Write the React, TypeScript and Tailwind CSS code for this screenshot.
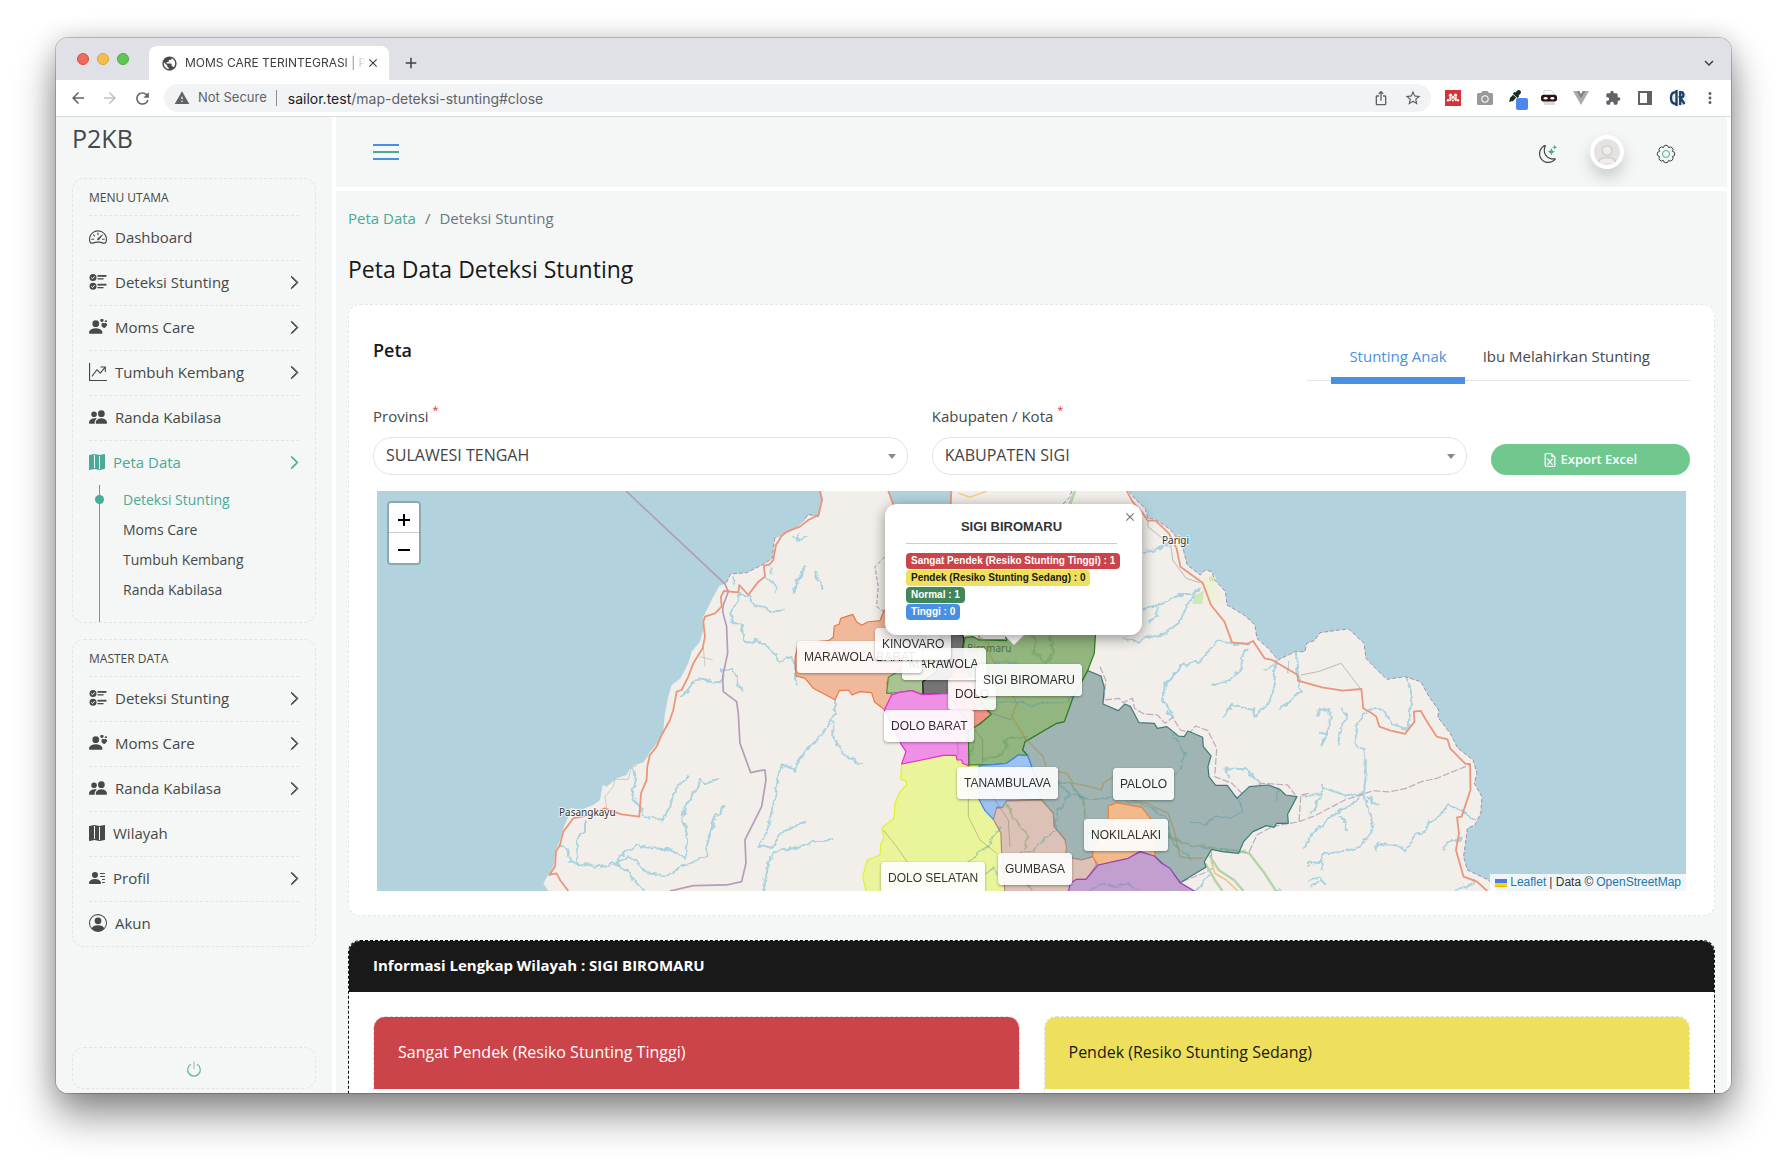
import { useId, useState } from "react";
import type { ReactNode } from "react";
import {
  BsChevronRight,
  BsFileEarmarkExcel,
  BsGraphUpArrow,
  BsMapFill,
  BsPeopleFill,
  BsPersonCircle,
  BsPersonHearts,
  BsPersonLinesFill,
  BsSpeedometer2,
} from "react-icons/bs";
import { FaCamera, FaEyeDropper } from "react-icons/fa";
import {
  MdAdd,
  MdArrowBack,
  MdArrowForward,
  MdClose,
  MdExpandMore,
  MdExtension,
  MdIosShare,
  MdMoreVert,
  MdPublic,
  MdRefresh,
  MdStarBorder,
  MdWarning,
} from "react-icons/md";

/* ---------- Browser chrome ---------- */

function TabStrip() {
  return (
    <div className="flex h-[42px] shrink-0 items-end bg-[#dfe1e6] pl-[21px]">
      <div className="flex gap-2 self-center">
        <button aria-label="Close window" className="size-3 rounded-full border border-[#d8503f] bg-[#ed6a5e]" />
        <button aria-label="Minimise window" className="size-3 rounded-full border border-[#dda13a] bg-[#f5bf4f]" />
        <button aria-label="Zoom window" className="size-3 rounded-full border border-[#4faa3c] bg-[#61c554]" />
      </div>
      <div className="ml-5 flex h-[34px] w-60 items-center rounded-t-lg bg-white pl-3 pr-[9px] text-[#3c4043]">
        <MdPublic className="size-[17px] shrink-0 text-[#46494d]" />
        <span className="ml-[7px] flex-1 whitespace-nowrap text-[12px] [mask-image:linear-gradient(to_right,black_88%,transparent)]">
          MOMS CARE TERINTEGRASI | P
        </span>
        <button aria-label="Close tab">
          <MdClose className="size-[14px]" />
        </button>
      </div>
      <button aria-label="New tab" className="mb-2 ml-[13px] text-[#3c4043]">
        <MdAdd className="size-[18px]" />
      </button>
      <button aria-label="Search tabs" className="mb-2 ml-auto mr-[13px] text-[#3c4043]">
        <MdExpandMore className="size-[18px]" />
      </button>
    </div>
  );
}

function Toolbar() {
  return (
    <div className="flex h-[37px] shrink-0 items-center border-b border-[#dadce0] bg-white pl-[13px] pr-3 text-[#5f6368]">
      <button aria-label="Back">
        <MdArrowBack className="size-[18px]" />
      </button>
      <button aria-label="Forward" className="ml-[14px] text-[#bdc1c6]">
        <MdArrowForward className="size-[18px]" />
      </button>
      <button aria-label="Reload" className="ml-[14px]">
        <MdRefresh className="size-[19px]" />
      </button>
      <div className="ml-3 flex h-7 flex-1 items-center rounded-full bg-[#f1f3f4] pl-[10px] pr-[9px]">
        <MdWarning className="size-4" />
        <span className="ml-2 whitespace-nowrap text-[13px]">Not Secure</span>
        <span className="ml-[9px] h-4 w-px bg-[#8a8d91]" />
        <span className="ml-[11px] flex-1 whitespace-nowrap text-[14px]">
          <span className="text-[#202124]">sailor.test</span>/map-deteksi-stunting#close
        </span>
        <button aria-label="Share">
          <MdIosShare className="size-[16px]" />
        </button>
        <button aria-label="Bookmark" className="ml-[15px]">
          <MdStarBorder className="size-[18px]" />
        </button>
      </div>
      <div className="ml-[14px] flex items-center gap-4">
        <svg viewBox="0 0 16 16" className="size-4" aria-hidden="true">
          <rect width="16" height="16" fill="#d63337" />
          <g fill="#fff">
            <circle cx="5.500" cy="5.200" r="1.600" />
            <circle cx="10.500" cy="5.200" r="1.600" />
            <circle cx="8" cy="7.300" r="1.500" />
            <circle cx="3" cy="10.300" r="1.200" />
            <circle cx="13" cy="10.300" r="1.200" />
            <circle cx="8" cy="10.600" r="1" />
            <path d="M4.300 6.300 7 8.800 5.800 11H4.300zM11.700 6.300 9 8.800l1.200 2.200h1.500z" />
          </g>
        </svg>
        <FaCamera className="size-4 text-[#97999b]" />
        <span className="relative block size-4">
          <FaEyeDropper className="size-3 text-[#1c2b20]" />
          <span className="absolute left-[7px] top-2 size-3 rounded-xs bg-[#4f86ee]" />
        </span>
        <svg viewBox="0 0 16 16" className="size-4" aria-hidden="true">
          <path d="M3 5V.5h7L13 3v2" fill="#fff" stroke="#ccc" strokeWidth=".8" />
          <path d="M2 11.500h12v3.500H3z" fill="#ddd" />
          <rect y="4.800" width="16" height="6.700" rx="2.500" fill="#2f1113" />
          <ellipse cx="4.600" cy="8.200" rx="2" ry="1.200" fill="#fff" />
          <ellipse cx="11.400" cy="8.200" rx="2" ry="1.200" fill="#fff" />
        </svg>
        <svg viewBox="0 0 16 16" className="size-4" aria-hidden="true">
          <path d="M0 1h3.300L8 9l4.700-8H16L8 15z" fill="#a9acaf" />
          <path d="M3.300 1h3L8 4l1.700-3h3L8 9z" fill="#7f8386" />
        </svg>
        <MdExtension className="size-4" />
        <svg viewBox="0 0 16 16" className="size-4" aria-hidden="true">
          <path d="M1 1h14v14H1zM3 3v10h7V3z" fill="#5f6368" fillRule="evenodd" />
        </svg>
        <svg viewBox="0 0 18 18" className="size-[18px]" aria-hidden="true">
          <circle cx="9" cy="9" r="9" fill="#e9eef3" />
          <path
            d="M6.500 3.200C3.400 3.200 2 5.500 2 9s1.400 5.800 4.500 5.800M7.500 1v16M11.200 2v14M11.200 3.200h1c3 0 3 5.300 0 5.300h-1l4.300 6.500"
            fill="none"
            stroke="#1d3f66"
            strokeWidth="2.300"
          />
        </svg>
        <button aria-label="Browser menu" className="-ml-[2px]">
          <MdMoreVert className="size-[18px]" />
        </button>
      </div>
    </div>
  );
}

/* ---------- Sidebar ---------- */

function ChecklistIcon() {
  return (
    <svg viewBox="0 0 17 16" className="h-4 w-[18px]" fill="currentColor" aria-hidden="true">
      <circle cx="3.500" cy="3.500" r="3.500" />
      <circle cx="3.500" cy="12.300" r="3.500" />
      <path d="M1.700 3.500 3 4.800 5.300 2.300M1.700 12.300 3 13.600l2.300-2.500" stroke="#f4f7f6" strokeWidth="1" fill="none" />
      <rect x="8" y="1" width="9" height="1.800" />
      <rect x="8" y="4.200" width="6" height="1.300" />
      <rect x="8" y="9.800" width="9" height="1.800" />
      <rect x="8" y="13" width="6" height="1.300" />
    </svg>
  );
}

type Item = { label: string; icon: ReactNode; arrow?: boolean; active?: boolean };

const mainMenu: Item[] = [
  { label: "Dashboard", icon: <BsSpeedometer2 className="size-[18px]" /> },
  { label: "Deteksi Stunting", icon: <ChecklistIcon />, arrow: true },
  { label: "Moms Care", icon: <BsPersonHearts className="size-[18px]" />, arrow: true },
  { label: "Tumbuh Kembang", icon: <BsGraphUpArrow className="size-[18px]" />, arrow: true },
  { label: "Randa Kabilasa", icon: <BsPeopleFill className="size-[18px]" /> },
  { label: "Peta Data", icon: <BsMapFill className="size-4" />, arrow: true, active: true },
];

const masterMenu: Item[] = [
  { label: "Deteksi Stunting", icon: <ChecklistIcon />, arrow: true },
  { label: "Moms Care", icon: <BsPersonHearts className="size-[18px]" />, arrow: true },
  { label: "Randa Kabilasa", icon: <BsPeopleFill className="size-[18px]" />, arrow: true },
  { label: "Wilayah", icon: <BsMapFill className="size-4" /> },
  { label: "Profil", icon: <BsPersonLinesFill className="size-4" />, arrow: true },
  { label: "Akun", icon: <BsPersonCircle className="size-[18px]" /> },
];

const subMenu = ["Deteksi Stunting", "Moms Care", "Tumbuh Kembang", "Randa Kabilasa"];

function MenuBox({ title, items, children }: { title: string; items: Item[]; children?: ReactNode }) {
  return (
    <nav aria-label={title} className="rounded-xl border border-dashed border-[#e3e5e4] px-4">
      <h2 className="pb-2 pt-[10px] text-[12px] leading-[18px]">{title}</h2>
      <ul>
        {items.map((item) => (
          <li key={item.label} className="border-t border-dashed border-[#e3e5e4]">
            <a
              href="#"
              className={
                item.active
                  ? "flex h-11 items-center gap-2 pb-0.5 text-[15px] text-[#4aaa97]"
                  : "flex h-11 items-center gap-2 pb-0.5 text-[15px]"
              }
            >
              {item.icon}
              <span>{item.label}</span>
              {item.arrow && <BsChevronRight className="-mr-[3px] ml-auto size-[15px]" strokeWidth={1} />}
            </a>
          </li>
        ))}
      </ul>
      {children}
    </nav>
  );
}

function Sidebar() {
  return (
    <aside className="flex w-[280px] shrink-0 flex-col border-r-4 border-white px-4 pb-1 text-[#454948]">
      <div className="pt-[7px] text-[25px] leading-7">P2KB</div>
      <div className="mt-[26px] flex flex-col gap-4">
        <MenuBox title="MENU UTAMA" items={mainMenu}>
          <ul className="ml-[10px] border-l border-[#4aaa97] pb-[17px]">
            {subMenu.map((label, i) => (
              <li key={label} className="relative pl-[23px] text-[14px] leading-[30px]">
                {i === 0 && <span className="absolute -left-[5px] top-[10px] size-[9px] rounded-full bg-[#4aaa97]" />}
                <a href="#" className={i === 0 ? "text-[#4aaa97]" : ""}>
                  {label}
                </a>
              </li>
            ))}
          </ul>
        </MenuBox>
        <MenuBox title="MASTER DATA" items={masterMenu} />
      </div>
      <button
        aria-label="Log out"
        className="mt-auto flex h-[42px] items-center justify-center rounded-xl border border-dashed border-[#e3e5e4] pt-0.5"
      >
        <svg viewBox="0 0 16 16" className="size-4" fill="none" aria-hidden="true">
          <path d="M5 3.200a6.300 6.300 0 1 0 6 0" stroke="#62b5a5" strokeWidth="1.200" />
          <path d="M8 .5v7.500" stroke="#c9cccb" strokeWidth="1.800" />
        </svg>
      </button>
    </aside>
  );
}

/* ---------- Page header ---------- */

const gearPath = (() => {
  const at = (i: number) => {
    const a = (Math.PI / 4) * i + Math.PI / 8;
    return `${(9 + 6.9 * Math.cos(a)).toFixed(2)} ${(9 + 6.9 * Math.sin(a)).toFixed(2)}`;
  };
  return `M${at(0)}` + [1, 2, 3, 4, 5, 6, 7, 8].map((i) => `A2.650 2.650 0 0 1 ${at(i)}`).join("") + "Z";
})();

function PageHeader() {
  return (
    <header className="flex h-[74px] shrink-0 items-center border-b-4 border-white pl-[37px] pr-[52px]">
      <button aria-label="Toggle menu" className="flex w-[26px] flex-col gap-[5px]">
        <span className="h-[2px] bg-[#4a90e2]" />
        <span className="h-[2px] bg-[#4aaa97]" />
        <span className="h-[2px] bg-[#4a90e2]" />
      </button>
      <div className="ml-auto flex items-center gap-[33px]">
        <button aria-label="Dark mode" className="mt-1">
          <svg viewBox="0 0 16 16" className="size-[18px]" aria-hidden="true">
            <path
              fill="#3f4443"
              d="M6 .278a.768.768 0 0 1 .08.858 7.208 7.208 0 0 0-.878 3.460c0 4.021 3.278 7.277 7.318 7.277.527 0 1.040-.055 1.533-.16a.787.787 0 0 1 .81.316.733.733 0 0 1-.031.893A8.349 8.349 0 0 1 8.344 16C3.734 16 0 12.286 0 7.710 0 4.266 2.114 1.312 5.124.06A.752.752 0 0 1 6 .278zM4.858 1.311A7.269 7.269 0 0 0 1.025 7.710c0 4.020 3.279 7.276 7.319 7.276a7.316 7.316 0 0 0 5.205-2.162c-.337.042-.68.063-1.029.063-4.610 0-8.343-3.714-8.343-8.290 0-1.167.242-2.278.681-3.286z"
            />
            <path
              fill="#4aaa97"
              d="M10.794 3.148a.217.217 0 0 1 .412 0l.387 1.162c.173.518.579.924 1.097 1.097l1.162.387a.217.217 0 0 1 0 .412l-1.162.387a1.734 1.734 0 0 0-1.097 1.097l-.387 1.162a.217.217 0 0 1-.412 0l-.387-1.162A1.734 1.734 0 0 0 9.310 6.593l-1.162-.387a.217.217 0 0 1 0-.412l1.162-.387a1.734 1.734 0 0 0 1.097-1.097l.387-1.162zM13.863.099a.145.145 0 0 1 .274 0l.258.774c.115.346.386.617.732.732l.774.258a.145.145 0 0 1 0 .274l-.774.258a1.156 1.156 0 0 0-.732.732l-.258.774a.145.145 0 0 1-.274 0l-.258-.774a1.156 1.156 0 0 0-.732-.732l-.774-.258a.145.145 0 0 1 0-.274l.774-.258c.346-.115.617-.386.732-.732L13.863.1z"
            />
          </svg>
        </button>
        <button aria-label="Account" className="rounded-full border-4 border-white bg-[#e4e3e2] shadow-[0_8px_16px_rgba(0,0,0,0.18)]">
          <svg viewBox="0 0 26 26" className="size-[26px] rounded-full" fill="none" stroke="#d2d0cf" strokeWidth="1.600" aria-hidden="true">
            <circle cx="13" cy="11.500" r="4.800" fill="#eeedec" />
            <path d="M4.500 24c0-4 3.500-5.500 8.500-5.500s8.500 1.500 8.500 5.500" fill="#eeedec" />
          </svg>
        </button>
        <button aria-label="Settings" className="mt-1">
          <svg viewBox="0 0 18 18" className="size-[18px] overflow-visible" fill="none" strokeWidth="1" aria-hidden="true">
            <path d={gearPath} stroke="#3f4443" />
            <circle cx="9" cy="9" r="3.500" stroke="#4aaa97" />
          </svg>
        </button>
      </div>
    </header>
  );
}

/* ---------- Map ---------- */

type LineSet = string[];

const westRivers: LineSet = [
  "1165,345 1140,345 1110,400 1120,430 1145,430 1150,480 1175,490 1190,482 1215,495 1235,510 1260,545 1290,530 1305,545 1305,600 1312,612",
  "1165,345 1180,375 1210,380 1235,395 1272,390",
  "1338,260 1322,285 1310,310 1300,338",
  "1215,290 1240,310 1248,338",
  "1235,260 1235,285",
  "1115,285 1125,315",
  "1083,570 1120,568 1130,600 1148,632",
  "960,643 980,635 1000,605 1030,598 1060,608 1085,605 1088,580",
  "820,855 828,900 815,940 825,970 845,985 850,1010 880,1013 905,1025 930,985 940,940 960,910 990,887",
  "975,1137 985,1080 970,1020 975,980 1000,940 1020,900 1040,910 1078,897",
  "765,1152 780,1130 830,1095 870,1105 930,1108 975,1137",
  "1090,975 1085,1000 1065,1010 1050,1060 1035,1130 975,1155 925,1187 860,1180 810,1130 765,1152 700,1160 655,1150 650,1075 675,1060 675,1020",
  "600,1095 625,1110 630,1145 660,1155",
  "765,1152 810,1175 830,1210 855,1233",
  "1350,800 1315,840 1305,870 1270,855 1255,890 1245,950 1225,1040 1198,1100 1235,1100 1270,1055 1335,1025",
  "1350,1090 1300,1105 1240,1115 1225,1150 1210,1233",
  "1425,659 1425,700 1390,760 1340,810",
  "1420,720 1420,770 1450,825 1507,850",
  "1350,1090 1420,1077",
  "1340,260 1300,335",
  "1365,270 1390,328",
  "1295,165 1320,180 1340,170",
  "1315,160 1318,185",
  "2460,565 2420,610 2410,660 2435,700",
];

const westRoad =
  "1380,33 1386,60 1376,105 1345,120 1320,140 1280,155 1265,168 1248,195 1240,240 1228,254 1212,257 1215,290 1195,305 1165,345 1138,315 1135,337 1092,333 1083,350 1085,380 1065,400 1035,410 1030,425 1035,470 1028,505 1000,550 985,590 965,630 950,635 940,690 930,720 905,765 890,800 870,825 862,860 860,900 843,940 838,1010 785,1003 735,985 690,1005 640,1015 610,1055 600,1095 588,1115 585,1160 568,1185 590,1180 600,1200 625,1233";

const westCoast =
  "1383,33 1390,60 1380,85 1376,110 1345,105 1330,125 1300,150 1265,168 1245,175 1240,205 1237,235 1212,252 1160,278 1112,282 1098,310 1078,318 1060,350 1045,380 1028,415 1030,450 1020,485 995,515 985,550 962,595 935,615 925,650 915,700 910,750 895,785 870,815 850,845 815,855 800,885 770,895 740,920 728,915 720,960 700,975 660,990 632,983 625,1010 612,1040 600,1080 588,1110 580,1160 565,1185 550,1210 565,1233";

const eastCoast =
  "75,33 90,55 118,85 125,115 145,118 185,150 205,180 218,210 228,255 262,285 275,270 292,275 300,300 328,335 332,375 355,390 380,408 405,435 410,475 440,505 465,540 510,515 535,515 540,490 560,482 575,458 625,450 650,447 690,490 695,535 720,565 750,598 797,590 838,605 860,650 885,690 883,712 915,760 935,805 975,840 985,880 978,910 998,950 995,1000 980,1035 960,1045 955,1090 950,1130 960,1170 1015,1200 1040,1233";

const eastRoad =
  "70,33 85,65 112,100 125,122 145,122 180,160 200,205 210,260 240,285 268,308 290,375 325,425 345,487 385,492 400,483 430,535 450,540 517,585 517,602 580,622 635,632 683,627 688,685 710,700 722,710 730,740 760,752 797,762 822,725 820,695 838,693 860,735 880,770 908,778 915,805 955,852 967,852 968,930 945,1010 933,1012 938,1060 930,1110 950,1190 985,1205 1012,1233";

const eastRivers: LineSet = [
  "110,213 150,208 185,195",
  "262,320 240,345 205,345 170,370 130,380 110,390",
  "262,320 225,385 205,430 170,460 115,470 100,485 60,475",
  "150,380 150,410 125,425",
  "395,490 350,495 305,480 265,540 215,555 170,610 165,670",
  "385,505 370,530 370,570 330,605 288,618",
  "172,688 190,715",
  "460,545 455,610 440,670 420,690 405,710 400,690 345,675 320,710",
  "430,573 455,555",
  "492,540 490,580",
  "512,515 515,570 525,635 490,665 468,695",
  "570,710 575,685 600,690 600,740 580,800",
  "575,755 595,765",
  "632,685 645,710 628,740 622,800",
  "695,695 670,730 665,790 688,810 695,870 690,940",
  "700,690 735,685 765,735 805,750 810,700 815,640 797,590",
  "335,895 330,865 380,868 420,910 430,930",
  "690,940 640,950 580,918 575,940 530,950",
  "580,940 560,990 545,1005",
  "690,940 640,985 590,1020 555,1060 532,1110",
  "690,940 700,985 715,1030 700,1075 680,1100 640,1115 590,1120 575,1150 545,1145 548,1160",
  "620,1010 645,1030 645,1050",
  "700,950 710,970 730,970",
  "718,1115 725,1090 780,1100 800,1110 830,1060 850,1055 860,1025 890,1005 910,970 930,985 980,1020",
  "545,1200 570,1190 590,1215",
  "550,1220 580,1200",
  "895,1110 920,1080 945,1080",
  "930,1230 980,1205",
  "250,1233 290,1185",
  "455,1233 470,1233",
  "575,1150 580,1170",
];

const eastBoundaries: LineSet = [
  "0,560 15,600 10,660 50,655 60,668 85,655 90,685 115,702 150,705 170,730 190,712 210,750 235,758 250,738 282,752 305,805 300,890 345,910 375,945 420,910 490,915 510,945",
  "390,1115 410,1065 450,1040 520,1025 560,1008 640,960 715,932 755,936 800,925 840,905 880,895 965,855",
  "545,940 525,945 520,1025",
  "215,1205 270,1180 295,1165 290,1110",
];

type Region = { name: string; fill: string; line: string; points: string };

const regions: Region[] = [
  {
    name: "Marawola Barat",
    fill: "#f1b99c",
    line: "#e87a45",
    points:
      "313,30 300,62 262,66 246,76 230,66 218,43 182,55 178,72 163,78 160,112 145,122 55,130 45,175 48,228 75,235 100,265 165,299 178,272 205,270 216,285 240,275 275,278 283,305 315,330 335,285 320,250 330,230 370,200 440,150 430,60",
  },
  {
    name: "Kinovaro",
    fill: "#a9c492",
    line: "#4f8f3b",
    points: "320,280 325,232 370,205 440,130 480,180 468,235 430,240 427,284 395,272 355,278",
  },
  {
    name: "Marawola",
    fill: "#767474",
    line: "#1b1b1b",
    points: "480,100 548,105 552,118 548,150 555,240 505,280 430,284 428,245 470,215",
  },
  {
    name: "Dolo",
    fill: "#f0948a",
    line: "#d9443b",
    points: "525,180 600,180 620,330 635,343 580,386 545,340 505,280",
  },
  {
    name: "Dolo Selatan",
    fill: "#eaf59b",
    line: "#e3f02c",
    points:
      "365,492 425,480 490,466 528,466 532,485 567,498 595,495 600,600 640,658 663,700 665,760 675,880 260,880 248,830 262,780 300,765 302,735 312,712 305,685 342,655 345,610 360,575 380,555 378,543 362,538",
  },
  {
    name: "Dolo Barat",
    fill: "#f08fe6",
    line: "#e02fd0",
    points:
      "335,285 355,278 395,272 427,284 505,280 545,340 580,386 565,390 567,498 548,490 545,480 532,480 528,466 490,466 425,480 365,492 378,455 362,430 313,330",
  },
  {
    name: "Palolo",
    fill: "#a0b5b3",
    line: "#3d7a76",
    points:
      "923,212 963,228 973,262 969,312 1015,332 1035,312 1052,320 1077,368 1123,370 1132,385 1161,380 1195,408 1213,410 1224,393 1268,412 1270,440 1293,468 1284,500 1287,530 1307,556 1342,556 1371,595 1408,560 1465,555 1500,568 1517,585 1551,590 1523,643 1525,670 1490,670 1482,682 1459,677 1419,695 1391,725 1376,760 1327,755 1295,748 1273,785 1278,802 1247,820 1201,848 1180,820 1123,768 1080,755 940,770 905,780 855,770 855,720 822,680 820,640 785,600 770,540 743,467 728,450 735,425 790,393 830,370 853,365 880,290",
  },
  {
    name: "Sigi Biromaru",
    fill: "#93b680",
    line: "#2d7d1f",
    points:
      "555,112 580,110 597,120 680,122 680,95 947,95 943,160 923,212 880,290 853,365 830,370 790,393 735,425 728,450 743,467 715,465 680,490 640,494 567,495 565,392 600,372 634,343 600,300 560,200 548,160",
  },
  {
    name: "Tanambulava",
    fill: "#9dc1f0",
    line: "#4187ea",
    points:
      "597,497 640,494 680,490 715,465 743,467 755,500 785,598 680,603 668,622 650,622 650,640 640,658 615,632 598,600",
  },
  {
    name: "Gumbasa",
    fill: "#dcc2b6",
    line: "#b48a79",
    points:
      "640,658 650,625 668,622 680,603 785,600 820,640 822,680 855,720 860,745 855,770 905,780 940,770 950,795 918,838 890,838 865,880 675,880 665,760 663,700",
  },
  {
    name: "Nokilalaki",
    fill: "#f2ba8c",
    line: "#e8833a",
    points: "985,618 1010,608 1085,622 1115,660 1125,700 1125,770 1080,755 1045,775 955,795 938,770 940,740 985,680",
  },
  {
    name: "Kulawi",
    fill: "#c39fcf",
    line: "#9a3fbf",
    points: "865,880 870,850 890,838 918,838 955,795 1045,775 1080,755 1123,768 1145,790 1170,805 1200,848 1255,880",
  },
];

const innerRoads: LineSet = [
  "600,112 625,130 630,165 700,290 710,310 695,350 740,420 790,470 800,510 860,520 880,550 930,560 965,570 970,550 1000,530",
  "1000,590 1100,610 1165,640 1185,700 1200,770 1230,775 1270,775",
];
const innerGreens: LineSet = [
  "740,90 770,120 760,160 800,185 820,160 810,100",
  "735,425 740,410 680,410 670,425 685,440 665,465 610,480",
  "570,410 585,430 570,470",
  "680,610 700,650 740,700 735,750",
  "690,790 740,840 760,873",
  "830,545 870,550 910,600 915,650",
  "1160,700 1200,730 1300,745 1400,755",
];
const innerRivers: LineSet = [
  "640,190 680,180 730,200 800,230 850,240",
  "640,310 700,300 760,315 850,310 880,290",
  "830,545 870,580 830,640 825,690 760,750 700,770",
  "870,580 930,600 1000,590 1110,620 1160,660 1180,730 1240,780",
  "660,680 620,740 560,790",
  "600,840 640,800 660,830",
  "1180,400 1213,460 1207,500 1180,530",
  "1230,660 1270,675 1310,650 1350,655 1390,635 1367,585",
  "1495,570 1490,610",
  "930,870 970,850 1010,860 1050,850 1070,870",
];
const innerTracks: LineSet = [
  "530,390 535,465",
  "585,390 608,420 608,490",
  "635,340 695,360",
  "565,560 565,650 600,720 650,760",
  "310,690 350,740 405,820 420,873",
  "635,585 685,660 690,740",
];

function Lines({ set, color, width, opacity = 1, dash }: { set: LineSet; color: string; width: number; opacity?: number; dash?: string }) {
  return (
    <g fill="none" stroke={color} strokeWidth={width} strokeDasharray={dash} strokeLinejoin="round" opacity={opacity}>
      {set.map((points) => (
        <polyline key={points} points={points} vectorEffect="non-scaling-stroke" />
      ))}
    </g>
  );
}

function MapDrawing() {
  const rough = useId();
  const west = "matrix(0.3333 0 0 0.3333 -17 -11)";
  const east = "matrix(0.3827 0 0 0.3333 723 -11)";
  const centre = "matrix(0.3333 0 0 0.3333 403 109)";
  return (
    <svg width="1309" height="400" viewBox="0 0 1309 400" className="absolute left-0 top-0 max-w-none" aria-hidden="true">
      <defs>
        <filter id={rough} x="0" y="0" width="1309" height="400" filterUnits="userSpaceOnUse">
          <feTurbulence type="fractalNoise" baseFrequency="0.12" numOctaves="3" seed="4" />
          <feDisplacementMap in="SourceGraphic" scale="7" xChannelSelector="R" yChannelSelector="G" />
        </filter>
      </defs>
      <rect width="1309" height="400" fill="#b2d2dd" />
      <polygon transform={west} fill="#f2efea" points={`${westCoast} 2250,1233 2250,33`} />
      <polygon transform={east} fill="#f2efea" points={`${eastCoast} -300,1233 -300,33`} />
      <polygon fill="#b2d2dd" points="511,0 516,14 530,60 574,60 574,0" />
      <g transform={east}>
        <polygon points="268,290 300,285 318,370 280,378" fill="#eef0d8" />
        <polygon points="250,345 272,332 268,372 240,372" fill="#cfe8b6" />
        <rect x="285" y="290" width="13" height="14" fill="#cfe8b6" />
      </g>
      <g filter={`url(#${rough})`}>
        <g transform={west}>
          <Lines set={westRivers} color="#aad3df" width={2} />
        </g>
        <g transform={east}>
          <Lines set={eastRivers} color="#aad3df" width={2} />
        </g>
      </g>
      <g transform={west}>
        <Lines set={["740,985 735,950 760,920 765,898 805,898 815,858 850,845 870,820", "1030,500 1035,560", "1020,530 1058,540"]} color="#c4c1bd" width={0.8} />
        <Lines
          set={["798,33 1095,312 1105,335 1090,375 1088,395 1100,440 1103,520 1088,590 1090,635 1130,665 1135,700 1140,790 1172,878 1200,872 1215,870 1218,900 1205,980 1155,1080 1158,1150 1145,1205 1100,1215 1000,1217 930,1233"]}
          color="#b49db8"
          width={1.7}
        />
        <Lines set={["1376,110 1345,103 1330,122", "1245,173 1240,205 1237,235 1212,252 1160,278 1112,282 1098,310", "1575,230 1545,260 1555,320 1550,380 1572,395", "2110,72 2130,50 2135,33"]} color="#a58fae" width={1} dash="4 2" />
        <Lines set={[westRoad, "1585,33 1595,60 1602,80", "1774,33 1772,80"]} color="#ea967b" width={1.8} />
        <Lines set={["1795,40 1830,52 1880,33"]} color="#f3cf8e" width={1.6} />
        <Lines set={["2145,33 2130,72"]} color="#b9d6ac" width={3} />
      </g>
      <g transform={east}>
        <Lines set={["525,585 570,575 630,550 670,610 680,625", "125,122 125,140 185,195 190,240 225,295 260,308"]} color="#bdbab6" width={1} />
        <Lines set={[eastCoast]} color="#a58fae" width={1} dash="4 2" />
        <Lines set={eastBoundaries} color="#bdaabf" width={1.2} dash="7 2" />
        <Lines set={["365,1115 390,1120 430,1180 460,1233", "285,1125 310,1170 350,1200 375,1233", "275,1150 300,1200 320,1233"]} color="#b5d3ab" width={2.4} />
        <Lines set={["290,1140 300,1180 330,1200 360,1233"]} color="#eec583" width={1.6} />
        <Lines set={[eastRoad]} color="#ea967b" width={1.8} />
      </g>
      <g transform={centre}>
        {regions.map((r) => (
          <polygon key={r.name} points={r.points} fill={r.fill} stroke={r.line} strokeWidth="1.200" strokeLinejoin="round" vectorEffect="non-scaling-stroke" />
        ))}
        <rect x="597" y="95" width="80" height="24" fill="#efedea" stroke="#555" strokeWidth="2" />
      </g>
      <g filter={`url(#${rough})`}>
        <g transform={centre}>
          <Lines set={innerGreens} color="#4c8c4b" width={2.4} opacity={0.3} />
          <Lines set={innerRivers} color="#4f94a6" width={1.5} opacity={0.42} />
        </g>
      </g>
      <g transform={centre}>
        <Lines set={innerRoads} color="#a98b46" width={1.6} opacity={0.5} />
        <Lines set={innerTracks} color="#6f6f55" width={0.8} opacity={0.5} />
      </g>
      <g fontFamily="'Noto Sans', sans-serif" fontSize="10" paintOrder="stroke" strokeLinejoin="round">
        <text x="182" y="325" fill="#333" stroke="#fff" strokeWidth="2" strokeOpacity="0.7">Pasangkayu</text>
        <text x="785" y="53" fill="#333" stroke="#fff" strokeWidth="2" strokeOpacity="0.7">Parigi</text>
        <text x="590" y="161" fill="#4f7145">Biromaru</text>
      </g>
    </svg>
  );
}

const mapLabels = [
  { text: "DOLO", place: "left-[571px] top-[187px]" },
  { text: "MARAWOLA", place: "left-[525px] top-[157px]" },
  { text: "MARAWOLA BARAT", place: "left-[420px] top-[150px]" },
  { text: "KINOVARO", place: "left-[498px] top-[137px]" },
  { text: "SIGI BIROMARU", place: "left-[599px] top-[173px]" },
  { text: "DOLO BARAT", place: "left-[507px] top-[219px]" },
  { text: "TANAMBULAVA", place: "left-[580px] top-[276px]" },
  { text: "PALOLO", place: "left-[736px] top-[277px]" },
  { text: "NOKILALAKI", place: "left-[707px] top-[328px]" },
  { text: "GUMBASA", place: "left-[621px] top-[362px]" },
  { text: "DOLO SELATAN", place: "left-[504px] top-[371px]" },
];

function MapPopup({ onClose }: { onClose: () => void }) {
  return (
    <div className="absolute left-[508px] top-[13px] w-[257px]">
      <div className="relative h-[131px] rounded-xl bg-white pl-[21px] pr-[25px] pt-[13px] text-[#333] shadow-[0_3px_14px_rgba(0,0,0,0.4)]">
        <div className="border-b border-[#ccc] pb-[7px] text-center text-[13px] font-bold leading-[19px]">SIGI BIROMARU</div>
        <div className="mt-[9px] flex flex-col items-start gap-px whitespace-nowrap text-[10px] font-bold leading-4 text-white">
          <span className="rounded bg-[#cb444a] px-[5px]">Sangat Pendek (Resiko Stunting Tinggi) : 1</span>
          <span className="rounded bg-[#eedf5c] px-[5px] text-[#191919]">Pendek (Resiko Stunting Sedang) : 0</span>
          <span className="rounded bg-[#40865b] px-[5px]">Normal : 1</span>
          <span className="rounded bg-[#4a90e2] px-[5px]">Tinggi : 0</span>
        </div>
        <button aria-label="Close popup" onClick={onClose} className="absolute right-[5px] top-[6px] text-[#757575]">
          <MdClose className="size-[14px]" />
        </button>
      </div>
      <svg viewBox="0 0 20 10" className="mx-auto h-[10px] w-5" aria-hidden="true">
        <path d="M0 0h20L10 10z" fill="#fff" />
      </svg>
    </div>
  );
}

function DistrictMap() {
  const [open, setOpen] = useState(true);
  return (
    <div className="relative mx-1 mt-4 h-[400px] overflow-hidden bg-[#b2d2dd] font-['Liberation_Sans',Arial,sans-serif] text-[12px]">
      <MapDrawing />
      {mapLabels.map((l) => (
        <div
          key={l.text}
          className={`absolute whitespace-nowrap rounded-[3px] border border-white bg-white px-[6px] py-[6px] leading-[18px] text-[#222] opacity-90 shadow-[0_1px_3px_rgba(0,0,0,0.4)] ${l.place}`}
        >
          {l.text}
        </div>
      ))}
      {open && <MapPopup onClose={() => setOpen(false)} />}
      <div className="absolute left-[10px] top-[10px] flex flex-col rounded border-2 border-black/20 bg-clip-padding">
        <button aria-label="Zoom in" className="flex h-[30px] w-[30px] items-center justify-center rounded-t-xs border-b border-[#ccc] bg-white pt-1">
          <svg viewBox="0 0 12 12" className="size-3" aria-hidden="true">
            <path d="M6 0v12M0 6h12" stroke="#000" strokeWidth="2" />
          </svg>
        </button>
        <button aria-label="Zoom out" className="flex h-[30px] w-[30px] items-center justify-center rounded-b-xs bg-white pt-1">
          <svg viewBox="0 0 12 12" className="size-3" aria-hidden="true">
            <path d="M0 6h12" stroke="#000" strokeWidth="2" />
          </svg>
        </button>
      </div>
      <div className="absolute bottom-0 right-0 flex items-center gap-[3px] whitespace-nowrap bg-white/80 px-[5px] leading-[17px] text-[#333]">
        <svg viewBox="0 0 12 8" className="h-2 w-3" aria-hidden="true">
          <path fill="#4c7be1" d="M0 0h12v4H0z" />
          <path fill="#ffd500" d="M0 4h12v3H0z" />
          <path fill="#e0bc00" d="M0 7h12v1H0z" />
        </svg>
        <a href="#" className="text-[#2277a8]">Leaflet</a>
        <span>| Data ©</span>
        <a href="#" className="text-[#2277a8]">OpenStreetMap</a>
      </div>
    </div>
  );
}

/* ---------- Content ---------- */

function SelectField({ label, value }: { label: string; value: string }) {
  const id = useId();
  return (
    <div className="col-span-5">
      <label htmlFor={id} className="block pb-0.5 text-[15px] leading-[22px] text-[#454948]">
        {label} <sup className="-top-2 text-[11px] text-[#dc3545]">*</sup>
      </label>
      <div className="relative mt-2">
        <select
          id={id}
          defaultValue={value}
          className="block h-[38px] w-full appearance-none rounded-full border border-[#e2e3df] bg-white pb-0.5 pl-3 pr-8 text-[16px] text-[#444]"
        >
          <option>{value}</option>
        </select>
        <svg viewBox="0 0 8 5" className="pointer-events-none absolute right-3 top-[17px] h-[5px] w-2" aria-hidden="true">
          <path d="M0 0h8L4 5z" fill="#888" />
        </svg>
      </div>
    </div>
  );
}

function MapCard() {
  return (
    <section className="mt-5 rounded-xl border border-dashed border-[#e3e5e4] bg-white p-6">
      <div className="flex justify-between">
        <h2 className="pt-[7px] text-[18px] font-semibold leading-7 text-[#191919]">Peta</h2>
        <div role="tablist" className="flex h-[52px] border-b border-[#e5e5e5] pl-6 pr-[22px] text-[15px] leading-6">
          <button role="tab" aria-selected="true" className="relative whitespace-nowrap px-[18px] pb-3 pt-[15px] text-[#4a90e2]">
            Stunting Anak
            <span className="absolute -bottom-1 left-0 h-[7px] w-full bg-[#4a90e2]" />
          </button>
          <button role="tab" aria-selected="false" className="whitespace-nowrap px-[18px] pb-3 pt-[15px] text-[#454948]">
            Ibu Melahirkan Stunting
          </button>
        </div>
      </div>
      <div className="mt-6 grid grid-cols-12 items-end gap-6">
        <SelectField label="Provinsi" value="SULAWESI TENGAH" />
        <SelectField label="Kabupaten / Kota" value="KABUPATEN SIGI" />
        <button className="col-span-2 flex h-[31px] items-center justify-center gap-[3px] rounded-full bg-[#71c88f] text-[13px] font-semibold text-white">
          <BsFileEarmarkExcel className="size-[14px]" strokeWidth={0.4} />
          Export Excel
        </button>
      </div>
      <DistrictMap />
    </section>
  );
}

function InfoCard() {
  return (
    <section className="mt-6 overflow-hidden rounded-t-xl border border-dashed border-black bg-white">
      <h2 className="bg-[#191919] px-6 pb-[14px] pt-3 text-[15px] font-bold leading-[25px] text-white">
        Informasi Lengkap Wilayah : SIGI BIROMARU
      </h2>
      <div className="grid grid-cols-2 gap-6 p-6 text-[16px] leading-6">
        <article className="h-48 overflow-hidden rounded-xl border border-dashed border-[#dcdedd]">
          <h3 className="bg-[#cb444a] px-6 pb-[25px] pt-[23px] text-white">Sangat Pendek (Resiko Stunting Tinggi)</h3>
        </article>
        <article className="h-48 overflow-hidden rounded-xl border border-dashed border-[#dcdedd]">
          <h3 className="bg-[#eedf5c] px-6 pb-[25px] pt-[23px] text-[#191919]">Pendek (Resiko Stunting Sedang)</h3>
        </article>
      </div>
    </section>
  );
}

export default function App() {
  return (
    <div className="h-screen bg-white px-14 pb-[74px] pt-[38px] font-[Inter,sans-serif]">
      <div className="flex h-full flex-col overflow-hidden rounded-xl bg-white shadow-[0_0_0_1px_rgba(0,0,0,0.2),0_22px_40px_rgba(0,0,0,0.45),0_0_24px_rgba(0,0,0,0.15)]">
        <TabStrip />
        <Toolbar />
        <div className="flex min-h-0 flex-1 bg-[#f4f7f6] font-['Open_Sans',sans-serif]">
          <Sidebar />
          <div className="flex min-w-0 flex-1 flex-col overflow-hidden border-r-4 border-white">
            <PageHeader />
            <main className="px-3 pt-[15px]">
              <nav aria-label="Breadcrumb" className="flex gap-[9px] text-[15px] leading-6 text-[#6c757d]">
                <a href="#" className="text-[#4aaa97]">Peta Data</a>
                <span>/</span>
                <span>Deteksi Stunting</span>
              </nav>
              <h1 className="mt-6 text-[23px] leading-[30px] text-[#191919]">Peta Data Deteksi Stunting</h1>
              <MapCard />
              <InfoCard />
            </main>
          </div>
        </div>
      </div>
    </div>
  );
}
